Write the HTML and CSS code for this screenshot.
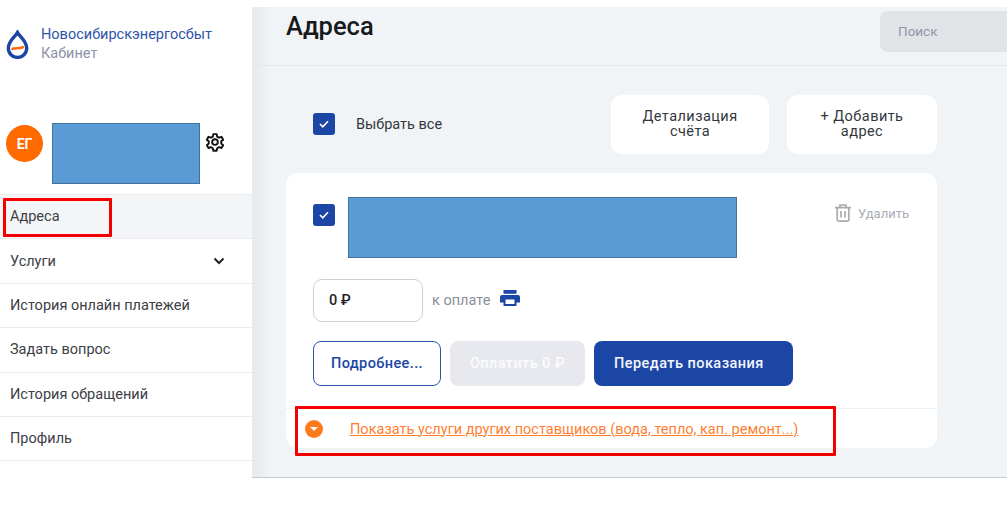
FILE: index.html
```html
<!DOCTYPE html>
<html lang="en">
<head>
    <meta charset="UTF-8">
    <title>Адреса</title>
    <link rel="stylesheet" href="styles.css">
</head>
<body>

<div class="app">
    <aside class="sidebar">
        <div class="brand">
            <svg class="brand-logo" width="23" height="29" viewBox="0 0 23 29">
                <path d="M11.500 2.500 C9.500 6.500 2.300 11 2.300 18.200 A9.200 9.200 0 0 0 20.700 18.200 C20.700 11 13.500 6.500 11.500 2.500 Z" fill="none" stroke="#1c46a6" stroke-width="3.4"/>
                <path d="M6.500 18.800 C9.500 17.600 12.500 19 16.800 17.200" fill="none" stroke="#ff6a13" stroke-width="2.600" stroke-linecap="round"/>
            </svg>
            <div class="brand-text">
                <div class="brand-name">Новосибирскэнергосбыт</div>
                <div class="brand-sub">Кабинет</div>
            </div>
        </div>

        <div class="user">
            <div class="avatar">ЕГ</div>
            <div class="redacted user-redacted"></div>
            <svg class="gear" width="20" height="20" viewBox="0 0 24 24" fill="none" stroke="#111" stroke-width="2.300" stroke-linejoin="round">
                <path d="M10 2.500h4l.6 3 2.300 1.300 2.900-1 2 3.400-2.300 2v2.600l2.300 2-2 3.400-2.900-1-2.300 1.300-.6 3h-4l-.6-3-2.300-1.300-2.900 1-2-3.400 2.300-2v-2.600l-2.300-2 2-3.400 2.900 1 2.300-1.300z"/>
                <circle cx="12" cy="12" r="3.400"/>
            </svg>
        </div>

        <nav class="nav">
            <a class="nav-item active">Адреса<span class="marker marker-nav"></span></a>
            <a class="nav-item">Услуги
                <svg class="chevron" width="12" height="8" viewBox="0 0 12 8" fill="none" stroke="#222" stroke-width="2"><path d="M1.500 1.500 6 6l4.500-4.500"/></svg>
            </a>
            <a class="nav-item">История онлайн платежей</a>
            <a class="nav-item">Задать вопрос</a>
            <a class="nav-item">История обращений</a>
            <a class="nav-item">Профиль</a>
        </nav>
    </aside>

    <main class="main">
        <header class="main-header">
            <h1>Адреса</h1>
            <div class="search">Поиск</div>
        </header>

        <div class="content">
            <div class="toolbar">
                <span class="checkbox">
                    <svg width="10" height="8" viewBox="0 0 10 8" fill="none" stroke="#fff" stroke-width="1.600"><path d="M1 4l2.800 2.800L9 1.200"/></svg>
                </span>
                <span class="select-all">Выбрать все</span>
                <button class="tool-btn detail-btn">Детализация<br>счёта</button>
                <button class="tool-btn add-btn">+ Добавить<br>адрес</button>
            </div>

            <section class="card">
                <div class="card-body">
                    <div class="card-top">
                        <span class="checkbox">
                            <svg width="10" height="8" viewBox="0 0 10 8" fill="none" stroke="#fff" stroke-width="1.600"><path d="M1 4l2.800 2.800L9 1.200"/></svg>
                        </span>
                        <div class="redacted address-redacted"></div>
                        <div class="delete">
                            <svg width="16" height="18" viewBox="0 0 16 18" fill="none" stroke="#a9abaf" stroke-width="1.700">
                                <path d="M0 3.600h16M5 3.400V1h6v2.400M2.200 3.600v12a1.500 1.500 0 0 0 1.500 1.500h8.600a1.500 1.500 0 0 0 1.500-1.500v-12M6 7v6.500M10 7v6.500"/>
                            </svg>
                            Удалить
                        </div>
                    </div>

                    <div class="amount-row">
                        <div class="amount">0 ₽</div>
                        <span class="amount-label">к оплате</span>
                        <svg class="printer" width="20" height="16" viewBox="0 0 20 16">
                            <path fill="#1c46a6" d="M3.500 0h13v3.800h-13z"/>
                            <path fill="#1c46a6" fill-rule="evenodd" d="M2 5h16a2 2 0 0 1 2 2v5.500h-3.500V16h-13v-3.500H0V7a2 2 0 0 1 2-2zM5.500 9.500V14h9V9.500z"/>
                        </svg>
                    </div>

                    <div class="actions">
                        <button class="btn btn-outline">Подробнее...</button>
                        <button class="btn btn-disabled">Оплатить 0 ₽</button>
                        <button class="btn btn-primary">Передать показания</button>
                    </div>
                </div>

                <div class="others">
                    <span class="others-icon"></span>
                    <a class="others-link">Показать услуги других поставщиков (вода, тепло, кап. ремонт...)</a>
                    <span class="marker marker-others"></span>
                </div>
            </section>
        </div>
    </main>
</div>

</body>
</html>
```

FILE: styles.css
```css
* {
    box-sizing: border-box;
}

body {
    margin: 0;
    background: #fff;
    font-family: Roboto, "Liberation Sans", sans-serif;
    color: #33373d;
}

.app {
    display: flex;
    width: 1007px;
    height: 478px;
}

/* sidebar */
.sidebar {
    width: 252px;
    flex-shrink: 0;
    background: #fff;
}

.brand {
    display: flex;
    align-items: flex-start;
    gap: 12px;
    padding: 25px 0 0 6px;
    height: 123px;
}

.brand-logo {
    margin-top: 5px;
}

.brand-name {
    font-size: 14.5px;
    line-height: 19px;
    color: #2d54a8;
}

.brand-sub {
    font-size: 14.5px;
    line-height: 19px;
    color: #8b93a5;
}

.user {
    display: flex;
    align-items: flex-start;
    height: 71px;
    padding-left: 6px;
}

.avatar {
    width: 37px;
    height: 37px;
    margin-top: 2px;
    border-radius: 50%;
    background: #ff6a00;
    color: #f8f8f8;
    font-size: 14px;
    font-weight: 700;
    display: flex;
    align-items: center;
    justify-content: center;
}

.redacted {
    background: #5b9bd5;
    border: 1px solid #41719c;
}

.user-redacted {
    width: 148px;
    height: 61px;
    margin-left: 9px;
}

.gear {
    margin: 9px 0 0 5px;
}

.nav {
    border-top: 1px solid #e9ebee;
}

.nav-item {
    position: relative;
    display: flex;
    align-items: center;
    justify-content: space-between;
    height: 44.4px;
    padding: 0 27px 0 10px;
    border-bottom: 1px solid #e9ebee;
    font-size: 14.5px;
    color: #3c4047;
}

.nav-item.active {
    background: #f4f5f7;
}

.marker {
    position: absolute;
    border: 3px solid #f40000;
    border-radius: 1px;
}

.marker-nav {
    left: 3px;
    top: 3px;
    width: 109px;
    height: 39px;
}

/* main */
.main {
    flex: 1;
    margin-top: 7px;
    background: linear-gradient(to right, #e7eaed, #f1f4f6 20px);
    border-bottom: 1px solid #c6c9ce;
    min-width: 0;
}

.main-header {
    display: flex;
    justify-content: space-between;
    height: 59px;
    padding: 4px 0 0 34px;
    border-bottom: 1px solid #e4e6ea;
}

.main-header h1 {
    margin: 0;
    font-size: 25.500px;
    line-height: 30px;
    font-weight: 500;
    color: #17191c;
}

.search {
    width: 127px;
    height: 41px;
    padding: 0 18px;
    border-radius: 8px 0 0 8px;
    background: #e1e4e7;
    color: #8f97a8;
    font-size: 13.5px;
    line-height: 41px;
}

.content {
    padding: 28px 70px 0 34px;
}

.toolbar {
    display: flex;
    align-items: center;
    height: 60px;
    padding-left: 27px;
}

.checkbox {
    display: flex;
    align-items: center;
    justify-content: center;
    width: 22px;
    height: 22px;
    flex-shrink: 0;
    border-radius: 3px;
    background: #1c46a6;
}

.select-all {
    margin-left: 21px;
    font-size: 14.5px;
}

.tool-btn {
    height: 59px;
    border: 0;
    border-radius: 11px;
    background: #fff;
    font-family: inherit;
    font-size: 14.5px;
    line-height: 15px;
    letter-spacing: 0.45px;
    color: #33373d;
}

.detail-btn {
    width: 158px;
    margin-left: auto;
}

.add-btn {
    width: 150px;
    margin-left: 18px;
}

.card {
    margin-top: 19px;
    height: 275px;
    border-radius: 12px;
    background: #fff;
}

.card-body {
    height: 236px;
    padding: 24px 27px 0;
    border-bottom: 1px solid #f0f1f3;
}

.card-top {
    display: flex;
    align-items: flex-start;
    height: 82px;
}

.card-top .checkbox {
    margin-top: 7px;
}

.address-redacted {
    width: 389px;
    height: 61px;
    margin-left: 13px;
}

.delete {
    display: flex;
    align-items: center;
    gap: 7px;
    margin: 7px 1px 0 auto;
    font-size: 13px;
    color: #a9adb6;
}

.amount-row {
    display: flex;
    align-items: center;
    height: 43px;
}

.amount {
    width: 110px;
    height: 43px;
    padding-left: 15px;
    border: 1px solid #cdd0d6;
    border-radius: 9px;
    font-size: 14.5px;
    font-weight: 500;
    line-height: 41px;
    color: #1f2226;
}

.amount-label {
    margin-left: 9px;
    font-size: 14.5px;
    color: #8a8f98;
}

.printer {
    margin: -5px 0 0 10px;
}

.actions {
    display: flex;
    gap: 9px;
    margin-top: 19px;
}

.btn {
    height: 45px;
    border: 0;
    border-radius: 8px;
    font-family: inherit;
    font-size: 14.5px;
    font-weight: 500;
    letter-spacing: 0.4px;
}

.btn-outline {
    width: 128px;
    border: 1px solid #2d54a8;
    background: #fff;
    color: #1c46a6;
}

.btn-disabled {
    width: 135px;
    background: #e7e9ee;
    color: #fbfbfc;
}

.btn-primary {
    width: 199px;
    padding: 0 0 0 20px;
    text-align: left;
    letter-spacing: 0.45px;
    background: #1c46a6;
    color: #f4f6fb;
}

.others {
    position: relative;
    display: flex;
    align-items: center;
    height: 39px;
    padding-left: 19px;
}

.others-icon {
    position: relative;
    width: 18px;
    height: 18px;
    border-radius: 50%;
    background: #ff7a1a;
}

.others-icon::after {
    content: "";
    position: absolute;
    left: 5px;
    top: 7px;
    border-style: solid;
    border-width: 4px 4px 0;
    border-color: #fff transparent transparent;
}

.others-link {
    margin: 1px 0 0 27px;
    font-size: 14.53px;
    color: #ff7f32;
    text-decoration: underline;
}

.marker-others {
    left: 9px;
    top: -3px;
    width: 541px;
    height: 50px;
}
```
